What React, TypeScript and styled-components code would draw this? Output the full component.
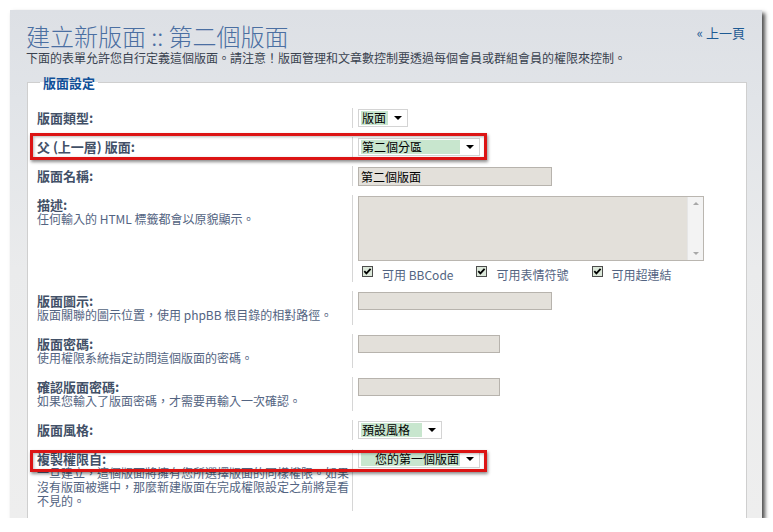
import React from "react";
import styled, { createGlobalStyle } from "styled-components";

const GlobalStyle = createGlobalStyle`
  html, body {
    margin: 0;
    padding: 0;
    background: #ffffff;
  }
  body {
    font-family: "Noto Sans CJK TC", "Noto Sans", sans-serif;
  }
`;

const Panel = styled.main`
  box-sizing: border-box;
  margin: 10px 0 0 10px;
  width: 752px;
  height: 508px;
  padding: 12px 15px 0 16px;
  background: linear-gradient(to bottom, #dde0e5 0px, #e1e4e8 90px, #eaebec 260px, #eeeeee 100%);
  box-shadow: 3px 3px 4px rgba(0, 0, 0, 0.7);
  overflow: hidden;
`;

const Header = styled.header`
  display: flex;
  justify-content: space-between;
  align-items: flex-start;
`;

const Title = styled.h1`
  margin: 0;
  font-size: 24px;
  line-height: 28px;
  font-weight: 300;
  color: #4b6fa2;
`;

const BackLink = styled.a`
  margin: 4px 2px 0 0;
  font-size: 13px;
  line-height: 14px;
  color: #1d5a93;
  text-decoration: none;
`;

const Intro = styled.p`
  margin: 1px 0 0;
  font-size: 12px;
  line-height: 14px;
  color: #3a4250;
`;

const Fieldset = styled.fieldset`
  margin: 9px 0 0 1px;
  padding: 17px 0 24px;
  border: 1px solid #cfcfcf;
  background: #ffffff;
  min-width: 0;
`;

const Legend = styled.legend`
  margin-left: 12px;
  padding: 0 3px;
  font-size: 13px;
  line-height: 17px;
  font-weight: bold;
  color: #115098;
`;

const Row = styled.div`
  position: relative;
  display: grid;
  grid-template-columns: 325px 1fr;
  margin-bottom: 9px;
`;

const LabelCell = styled.div`
  box-sizing: border-box;
  padding: 2px 1px 3px 9px;
  border-right: 1px solid #d6d6d6;
`;

const Label = styled.label`
  display: block;
  font-size: 13px;
  line-height: 15px;
  font-weight: bold;
  color: #425067;
`;

const Hint = styled.span`
  display: block;
  font-size: 12px;
  line-height: 14px;
  color: #536482;
`;

const FieldCell = styled.div`
  padding: 1px 0 0 5px;
`;

const Select = styled.div<{ $width: number }>`
  box-sizing: border-box;
  display: flex;
  width: ${(p) => p.$width}px;
  height: 18px;
  padding: 1px 0 1px 2px;
  border: 1px solid #d4d4d4;
  background: #ffffff;
`;

const SelectValue = styled.span<{ $indent?: number }>`
  flex: 1;
  padding-left: ${(p) => 1 + (p.$indent ?? 0)}px;
  background: #c8e6ce;
  font-size: 12px;
  line-height: 14px;
  color: #000000;
  white-space: nowrap;
`;

const SelectArrow = styled.span`
  width: 19px;
  display: flex;
  align-items: center;
  justify-content: center;

  &::after {
    content: "";
    border-left: 4px solid transparent;
    border-right: 4px solid transparent;
    border-top: 4px solid #000000;
  }
`;

const TextInput = styled.input<{ $width: number; $height?: number }>`
  box-sizing: border-box;
  display: block;
  width: ${(p) => p.$width}px;
  height: ${(p) => p.$height ?? 18}px;
  margin: 0;
  padding: 0 2px;
  border: 1px solid #b7b3ad;
  background: #e3e0da;
  font-family: inherit;
  font-size: 12px;
  color: #000000;
  outline: none;
`;

const TextBox = styled.div`
  box-sizing: border-box;
  display: flex;
  width: 346px;
  height: 65px;
  border: 1px solid #bab6b0;
  background: #e3e0da;
`;

const TextArea = styled.textarea`
  flex: 1;
  margin: 0;
  padding: 2px;
  border: none;
  background: transparent;
  resize: none;
  outline: none;
  font-family: inherit;
  font-size: 12px;
`;

const ScrollTrack = styled.div`
  width: 15px;
  display: flex;
  flex-direction: column;
  justify-content: space-between;
  align-items: center;
  padding: 5px 0 5px;
  border-left: 1px solid #e6e6e6;
  background: #f3f3f3;
`;

const ScrollArrow = styled.span<{ $down?: boolean }>`
  width: 0;
  height: 0;
  border-left: 3px solid transparent;
  border-right: 3px solid transparent;
  ${(p) =>
    p.$down ? "border-top: 3px solid #a8a8a8;" : "border-bottom: 3px solid #a8a8a8;"}
`;

const CheckRow = styled.div`
  display: flex;
  margin-top: 5px;
  padding-left: 4px;
`;

const CheckOption = styled.label`
  display: flex;
  align-items: flex-start;
  gap: 9px;
  margin-right: 23px;
  font-size: 12px;
  line-height: 14px;
  color: #536482;

  & > span {
    margin-top: 2px;
  }
`;

const Highlight = styled.span<{ $top: number; $height: number }>`
  position: absolute;
  left: 2px;
  width: 457px;
  top: ${(p) => p.$top}px;
  height: ${(p) => p.$height}px;
  box-sizing: border-box;
  border: 3px solid #dc1414;
  box-shadow: 1px 2px 3px rgba(0, 0, 0, 0.45), inset 1px 1px 3px rgba(0, 0, 0, 0.28);
  pointer-events: none;
`;

const CheckBox = () => (
  <svg width="11" height="11" viewBox="0 0 11 11" aria-hidden="true">
    <rect x="0.5" y="0.5" width="10" height="10" fill="#dce8da" stroke="#4d4d4d" />
    <path d="M2.3 5.2 L4.4 7.4 L8.6 2.8" fill="none" stroke="#000" strokeWidth="1.8" />
  </svg>
);

export default function App() {
  return (
    <>
      <GlobalStyle />
      <Panel>
        <Header>
          <Title>建立新版面 :: 第二個版面</Title>
          <BackLink href="#">« 上一頁</BackLink>
        </Header>
        <Intro>
          下面的表單允許您自行定義這個版面。請注意！版面管理和文章數控制要透過每個會員或群組會員的權限來控制。
        </Intro>

        <Fieldset>
          <Legend>版面設定</Legend>

          <Row>
            <LabelCell>
              <Label>版面類型:</Label>
            </LabelCell>
            <FieldCell>
              <Select $width={50}>
                <SelectValue>版面</SelectValue>
                <SelectArrow />
              </Select>
            </FieldCell>
          </Row>

          <Row>
            <LabelCell>
              <Label>父 (上一層) 版面:</Label>
            </LabelCell>
            <FieldCell>
              <Select $width={122}>
                <SelectValue>第二個分區</SelectValue>
                <SelectArrow />
              </Select>
            </FieldCell>
            <Highlight $top={-4} $height={27} />
          </Row>

          <Row>
            <LabelCell>
              <Label>版面名稱:</Label>
            </LabelCell>
            <FieldCell>
              <TextInput $width={194} $height={19} defaultValue="第二個版面" readOnly />
            </FieldCell>
          </Row>

          <Row>
            <LabelCell>
              <Label>描述:</Label>
              <Hint>任何輸入的 HTML 標籤都會以原貌顯示。</Hint>
            </LabelCell>
            <FieldCell>
              <TextBox>
                <TextArea readOnly />
                <ScrollTrack>
                  <ScrollArrow />
                  <ScrollArrow $down />
                </ScrollTrack>
              </TextBox>
              <CheckRow>
                <CheckOption>
                  <CheckBox />
                  <span>可用 BBCode</span>
                </CheckOption>
                <CheckOption>
                  <CheckBox />
                  <span>可用表情符號</span>
                </CheckOption>
                <CheckOption>
                  <CheckBox />
                  <span>可用超連結</span>
                </CheckOption>
              </CheckRow>
            </FieldCell>
          </Row>

          <Row>
            <LabelCell>
              <Label>版面圖示:</Label>
              <Hint>版面關聯的圖示位置，使用 phpBB 根目錄的相對路徑。</Hint>
            </LabelCell>
            <FieldCell>
              <TextInput $width={194} readOnly />
            </FieldCell>
          </Row>

          <Row>
            <LabelCell>
              <Label>版面密碼:</Label>
              <Hint>使用權限系統指定訪問這個版面的密碼。</Hint>
            </LabelCell>
            <FieldCell>
              <TextInput $width={142} type="password" readOnly />
            </FieldCell>
          </Row>

          <Row>
            <LabelCell>
              <Label>確認版面密碼:</Label>
              <Hint>如果您輸入了版面密碼，才需要再輸入一次確認。</Hint>
            </LabelCell>
            <FieldCell>
              <TextInput $width={142} type="password" readOnly />
            </FieldCell>
          </Row>

          <Row>
            <LabelCell>
              <Label>版面風格:</Label>
            </LabelCell>
            <FieldCell>
              <Select $width={84}>
                <SelectValue>預設風格</SelectValue>
                <SelectArrow />
              </Select>
            </FieldCell>
          </Row>

          <Row>
            <LabelCell>
              <Label>複製權限自:</Label>
              <Hint>
                一旦建立，這個版面將擁有您所選擇版面的同樣權限。如果沒有版面被選中，那麼新建版面在完成權限設定之前將是看不見的。
              </Hint>
            </LabelCell>
            <FieldCell>
              <Select $width={122}>
                <SelectValue $indent={13}>您的第一個版面</SelectValue>
                <SelectArrow />
              </Select>
            </FieldCell>
            <Highlight $top={1} $height={22} />
          </Row>
        </Fieldset>
      </Panel>
    </>
  );
}
